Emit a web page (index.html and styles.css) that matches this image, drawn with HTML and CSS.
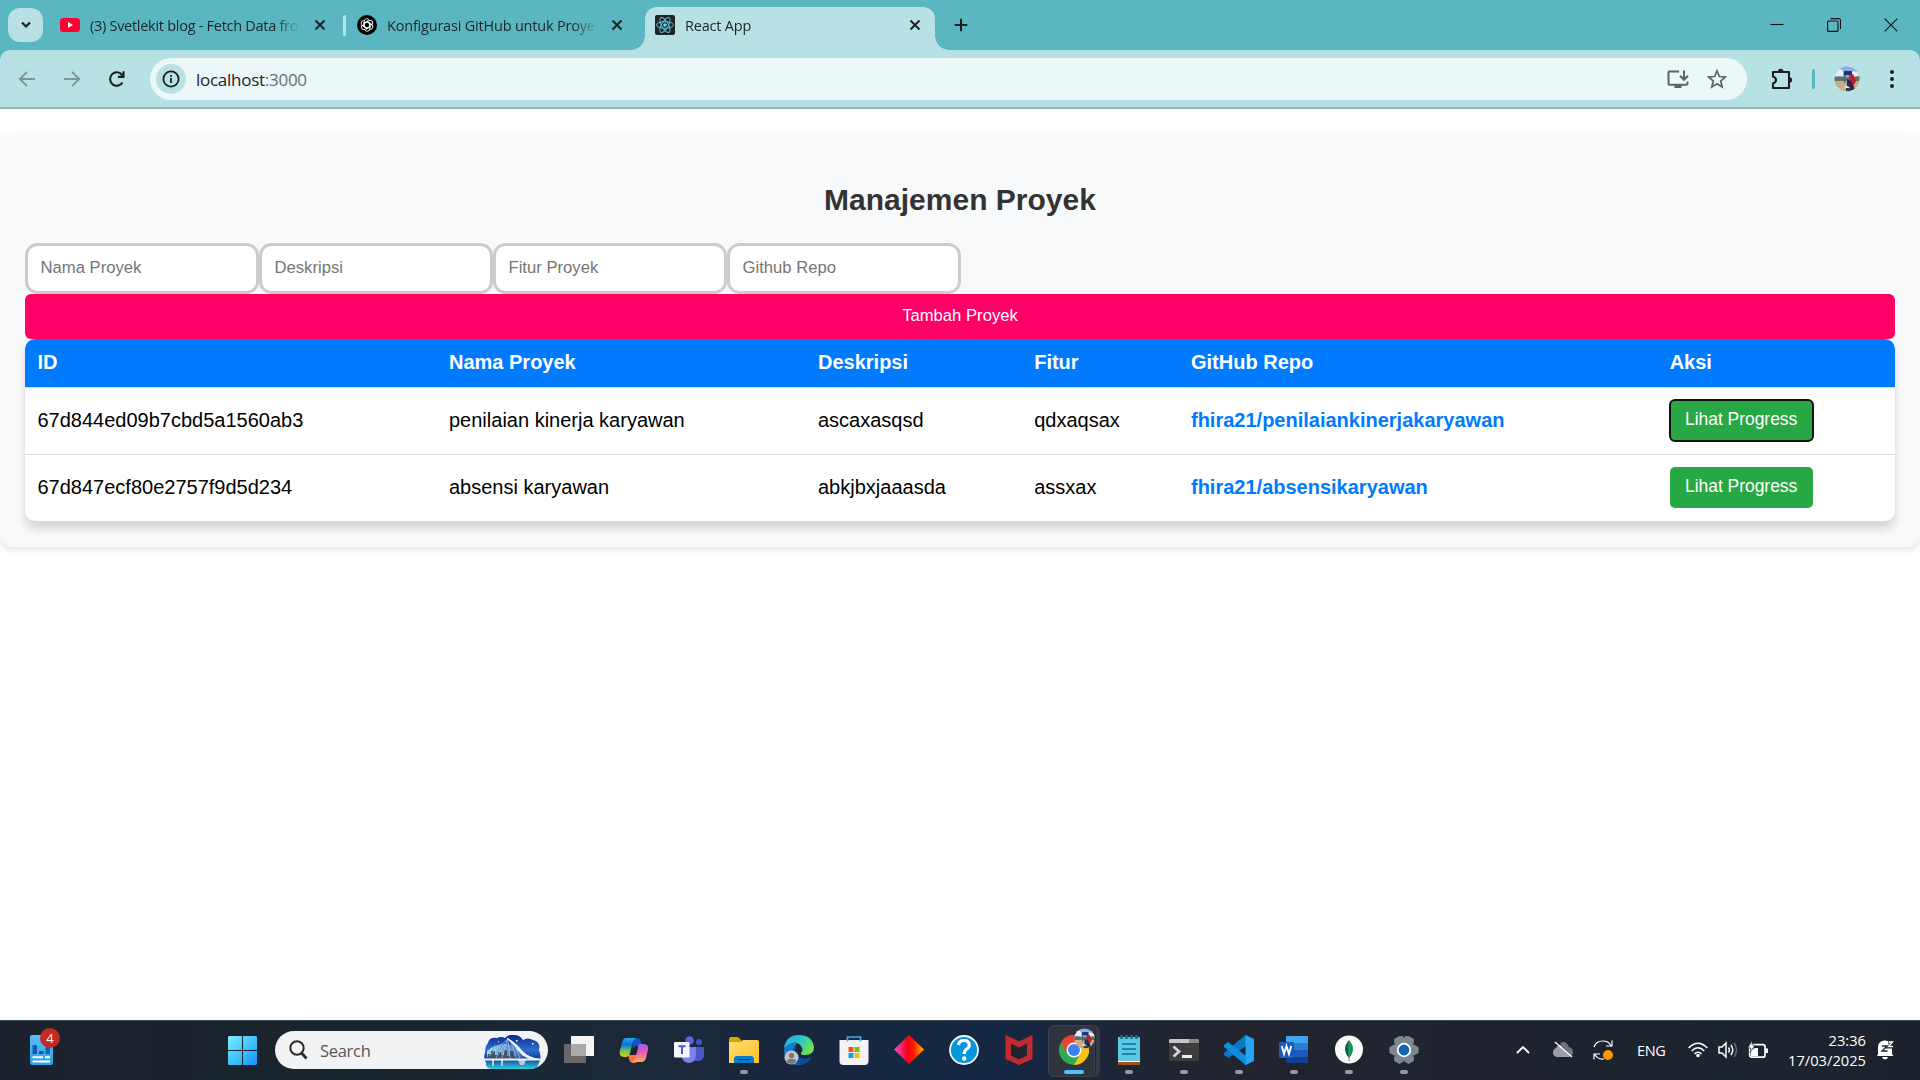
FILE: index.html
```html
<!DOCTYPE html>
<html lang="id">
<head>
<meta charset="utf-8">
<title>React App</title>
<link rel="stylesheet" href="styles.css">
</head>
<body>
<header class="browser">
  <div class="tabstrip">
    <button class="tab-search"><svg width="12" height="12" viewBox="0 0 12 12"><path d="M2 3.5 6 7.5 10 3.5" fill="none" stroke="#1f1f1f" stroke-width="2.2"/></svg></button>
    <div class="tab">
      <svg class="fav" viewBox="0 0 20 20"><rect y="3" width="20" height="14" rx="3.5" fill="#ff0033"/><path d="M8 7v6l5-3z" fill="#fff"/></svg>
      <span class="tab-title t1">(3) Svetlekit blog - Fetch Data from</span>
      <svg class="x" viewBox="0 0 12 12"><path d="M1.5 1.5l9 9M10.500 1.500l-9 9"/></svg>
    </div>
    <i class="sep"></i>
    <div class="tab second">
      <svg class="fav" viewBox="0 0 20 20"><circle cx="10" cy="10" r="10" fill="#000"/><g fill="none" stroke="#fff" stroke-width=".9"><path id="k" d="M7.300 10.800V6.300a2.600 2.600 0 0 1 5-1M7.300 8.300l3-1.700 4 2.300"/><use href="#k" transform="rotate(60 10 10)"/><use href="#k" transform="rotate(120 10 10)"/><use href="#k" transform="rotate(180 10 10)"/><use href="#k" transform="rotate(240 10 10)"/><use href="#k" transform="rotate(300 10 10)"/></g></svg>
      <span class="tab-title t2">Konfigurasi GitHub untuk Proyek</span>
      <svg class="x" viewBox="0 0 12 12"><path d="M1.500 1.500l9 9M10.500 1.500l-9 9"/></svg>
    </div>
    <div class="tab active">
      <svg class="fav" viewBox="0 0 20 20"><rect width="20" height="20" rx="2" fill="#222"/><g fill="none" stroke="#58c4dc" stroke-width="1"><ellipse cx="10" cy="10" rx="8.500" ry="3.300"/><ellipse cx="10" cy="10" rx="8.500" ry="3.300" transform="rotate(60 10 10)"/><ellipse cx="10" cy="10" rx="8.500" ry="3.300" transform="rotate(120 10 10)"/></g><circle cx="10" cy="10" r="1.800" fill="#61dafb"/></svg>
      <span class="tab-title t3">React App</span>
      <svg class="x" viewBox="0 0 12 12"><path d="M1.500 1.500l9 9M10.500 1.500l-9 9"/></svg>
    </div>
    <svg class="plus" viewBox="0 0 14 14"><path d="M7 .7v12.600M.7 7h12.600" stroke="#1f1f1f" stroke-width="2"/></svg>
    <div class="window-controls">
      <svg viewBox="0 0 14 14"><path d="M.5 6.500h13"/></svg>
      <svg viewBox="0 0 14 14"><rect x=".6" y="3" width="10.400" height="10.400" rx="1"/><path d="M3.500 .6h8q2 0 2 2v8.400"/></svg>
      <svg viewBox="0 0 14 14"><path d="M.7 .7l12.600 12.600M13.300 .7.7 13.300"/></svg>
    </div>
  </div>
  <div class="toolbar">
    <svg class="nav dim" viewBox="0 0 20 20"><path d="M18 10H3M10 2.800 2.800 10l7.200 7.200"/></svg>
    <svg class="nav dim" viewBox="0 0 20 20"><path d="M2 10h15M10 2.800l7.200 7.200-7.200 7.200"/></svg>
    <svg class="nav" viewBox="0 0 20 20"><path d="M15.500 13.500a6.700 6.700 0 1 1-.6-7.800l1.600 1.800M16.500 2.300v5.600h-5.600" stroke-width="2.100"/></svg>
    <div class="omnibox">
      <span class="info"><svg width="18" height="18" viewBox="0 0 18 18"><circle cx="9" cy="9" r="7.600" fill="none" stroke="#1f1f1f" stroke-width="1.800"/><path d="M9 8v5M9 5v1.800" stroke="#1f1f1f" stroke-width="1.800"/></svg></span>
      <span class="url">localhost<span>:3000</span></span>
      <svg class="install" viewBox="0 0 22 20"><g fill="none" stroke="#5a6365" stroke-width="2"><path d="M12 2.500H2.500q-1 0-1 1v11.200q0 1 1 1h17q1 0 1-1V12.500M17 1.500v9M13 6.800l4 4 4-4"/></g><path d="M7.500 16h7v3h-7z" fill="#5a6365"/></svg>
      <svg class="star" viewBox="0 0 20 20"><path d="M10 1.800l2.300 5.700 6 .5-4.600 4 1.500 6L10 14.800 4.800 18l1.500-6L1.700 8l6-.5z" fill="none" stroke="#5a6365" stroke-width="1.700"/></svg>
    </div>
    <svg class="puzzle" viewBox="0 0 22 22"><path d="M2 4h16v16H2v-4.500q3-1 3-3.500T2 8.500z" fill="none" stroke="#1f1f1f" stroke-width="2.100" stroke-linejoin="round"/><path d="M7 3.500a2.700 2.700 0 0 1 5.400 0M18.500 9.300a2.600 2.600 0 0 1 0 5.200" fill="#1f1f1f"/></svg>
    <i class="divider"></i>
    <svg class="avatar" viewBox="0 0 26 26"><defs><clipPath id="av"><circle cx="13" cy="13" r="12.500"/></clipPath><g id="pic"><path fill="#84aee4" d="M0 0h26v12H0z"/><path fill="#e9edf5" d="M1 4q5-3 8 1v5H1zM17 6q4-2 9 2v4h-9z"/><path fill="#65705a" d="M0 12q3-2 7-1 6 1 19-1v5H0z"/><path fill="#c9ad89" d="M0 15h26v11H0z"/><path fill="#203477" d="M10 5h8v4h-8z"/><path fill="#59606f" d="M10 9h1.500v8H10z"/><path fill="#ba2038" d="M15 9l4-1 3 7-2 4-4-4z"/><path fill="#262948" d="M13 13l4 2 2 3 2 6h-5l-3-5z"/><path fill="#e8ecf4" d="M10 20l6 1-3 3z"/><path fill="#343750" d="M12 22h5v3h-5z"/></g></defs><g clip-path="url(#av)"><use href="#pic"/></g></svg>
    <svg class="dots" viewBox="0 0 6 20"><circle cx="3" cy="3" r="2"/><circle cx="3" cy="10" r="2"/><circle cx="3" cy="17" r="2"/></svg>
  </div>
</header>

<main class="page">
  <section class="container">
    <h2>Manajemen Proyek</h2>
    <form class="fields">
      <input placeholder="Nama Proyek"><input placeholder="Deskripsi"><input placeholder="Fitur Proyek"><input placeholder="Github Repo">
    </form>
    <button class="add">Tambah Proyek</button>
    <table class="projects">
      <colgroup><col class="c-id"><col class="c-name"><col class="c-desc"><col class="c-feat"><col class="c-repo"><col class="c-act"></colgroup>
      <thead><tr><th>ID</th><th>Nama Proyek</th><th>Deskripsi</th><th>Fitur</th><th>GitHub Repo</th><th>Aksi</th></tr></thead>
      <tbody>
        <tr><td>67d844ed09b7cbd5a1560ab3</td><td>penilaian kinerja karyawan</td><td>ascaxasqsd</td><td>qdxaqsax</td><td><a>fhira21/penilaiankinerjakaryawan</a></td><td><button class="progress focused">Lihat Progress</button></td></tr>
        <tr><td>67d847ecf80e2757f9d5d234</td><td>absensi karyawan</td><td>abkjbxjaaasda</td><td>assxax</td><td><a>fhira21/absensikaryawan</a></td><td><button class="progress">Lihat Progress</button></td></tr>
      </tbody>
    </table>
  </section>
</main>

<footer class="taskbar">
  <div class="widget">
    <svg width="23" height="30" viewBox="0 0 23 30"><defs><linearGradient id="wg" x2="0" y2="1"><stop stop-color="#5cbcf5"/><stop offset="1" stop-color="#2b9fe6"/></linearGradient></defs><rect width="23" height="30" rx="2" fill="url(#wg)"/><path fill="#0b5fae" d="M2.500 10h4.500v9H2.500zM9 16h4.500v3H9zM15.500 12h4.500v7h-4.500z"/><path stroke="#fff" stroke-width="2" d="M2.500 22.300h10.500M15 22.300h5M2.500 26.500h17.500"/></svg>
    <span class="badge">4</span>
  </div>
  <svg class="start" viewBox="0 0 29 29"><defs><linearGradient id="sg" x2="1" y2="1"><stop stop-color="#7aeefd"/><stop offset=".5" stop-color="#43c4fd"/><stop offset="1" stop-color="#1490f7"/></linearGradient></defs><path fill="url(#sg)" d="M1 0h13v14H0V1zM15 0h13l1 1v13H15zM0 15h14v14H1l-1-1zM15 15h14v13l-1 1H15z"/></svg>
  <div class="search">
    <svg width="19" height="20" viewBox="0 0 19 20"><circle cx="8" cy="8" r="6.700" fill="none" stroke="#2b2b2b" stroke-width="2"/><path d="M12.500 13l5 5.500" stroke="#2b2b2b" stroke-width="2.800"/></svg>
    <span>Search</span>
    <svg class="bridge" viewBox="0 0 58 34"><defs><linearGradient id="bg" x2="0" y2="1"><stop stop-color="#0c2a8c"/><stop offset=".45" stop-color="#2f6fcb"/><stop offset=".7" stop-color="#0f3f9c"/><stop offset="1" stop-color="#2ed0dc"/></linearGradient><linearGradient id="sky" x2="1"><stop stop-color="#9fdcec"/><stop offset="1" stop-color="#6ea7e0" stop-opacity=".2"/></linearGradient></defs><path fill="url(#bg)" d="M5 8Q6 2 14 3q4-2 8 0 4-4 9-3 6 0 9 5 5-3 10 0 8 2 6 10 3 7 0 13-2 6-8 6H10q-8 0-7-6-3-5-1-10Q2 11 5 8z"/><path fill="url(#sky)" d="M4 16q8-8 21-7 10 3 17 14H4z"/><path fill="#43516b" d="M5 19h3v-3h4v4h3v-3h3v3h3v-5h3v6h3v-5h4v5h3v3H4z"/><path fill="#c0c7d5" d="M9 25h2v6H9zM18 25h2v6h-2zM35 25h8l-2 5h-4z"/><path d="M1 24.500h56" stroke="#eef3fa" stroke-width="1.800"/><path d="M24 3q9 5 16 14 6 6 17 7.500-10 1-18-5Q32 11 24 3z" fill="#f1f5fd" stroke="#f1f5fd"/><path d="M25 3.500L6 21M25 4l-12 19M25 4l-6 19M25 4l2 20M28 7l5 16M33 12l4 12" stroke="#d4e3f6" stroke-width=".5"/><path fill="#fff" d="M33 5h1.500v1.500H33zM49 8h1.500v1.500H49zM15 6h1v1h-1z"/></svg>
  </div>
  <div class="apps">
    <div class="app"><svg viewBox="0 0 30 30"><path fill="#f4f4f4" d="M7 1h23v20H7z"/><path fill="#686868" d="M0 9h22v19H0z"/><path fill="#aaa" d="M7 9h15v12H7z"/></svg></div>
    <div class="app"><svg viewBox="0 0 30 30"><defs><linearGradient id="c1" x2="0" y2="1"><stop stop-color="#22a6f0"/><stop offset=".35" stop-color="#1271d8"/><stop offset=".65" stop-color="#5cc469"/><stop offset="1" stop-color="#f7c80b"/></linearGradient><linearGradient id="c2" x2="0" y2="1"><stop stop-color="#9362e9"/><stop offset=".5" stop-color="#ef5caa"/><stop offset="1" stop-color="#ffb15a"/></linearGradient></defs><path fill="#1453ca" d="M13 3h5q3 0 4 4l1 4h-7l-2 3z"/><path fill="url(#c1)" d="M7 3h10q-3 2-4 7l-2 8q-1 4-5 4-7 0-5-7l2-7q1-5 4-5z"/><path fill="#f3763f" d="M9 20h8l3-5v8q-2 5-4 5h-2q-3 0-4-4z"/><path fill="url(#c2)" d="M20 9h5q5 0 4 6l-2 8q-1 4-5 4h-9q3-1 4-6l2-8q0-3 1-4z"/></svg></div>
    <div class="app"><svg viewBox="0 0 30 30"><circle cx="15.500" cy="5.500" r="4.300" fill="#5c65d8"/><circle cx="25" cy="7" r="3" fill="#4651c4"/><path fill="#4d55c7" d="M20 12h10v9q-1 5-6 5h-5z"/><path fill="#7b83eb" d="M9 12h13v8q-1 8-7 8-5 0-7-5z"/><rect y="7" width="15.500" height="15.500" rx="1" fill="#f5f5ff"/><path stroke="#5059c9" stroke-width="2" fill="none" d="M4.500 11.300h7M8 11v8"/></svg></div>
    <div class="app run"><svg viewBox="0 0 30 30"><defs><linearGradient id="fg" x2="1" y2="1"><stop stop-color="#ffdf70"/><stop offset="1" stop-color="#ffbe28"/></linearGradient></defs><path fill="#dfa000" d="M0 4q0-2 2-2h7l4 4v5H0z"/><path fill="url(#fg)" d="M0 7h12l2-2h14q2 0 2 2v21H0z"/><path fill="#087bcd" d="M5 28v-4q0-3 3-3h14q3 0 3 3v4z"/><path d="M9 24.500h12" stroke="#04457c"/></svg></div>
    <div class="app"><svg viewBox="0 0 30 30"><defs><linearGradient id="eg" x2="1" y2=".5"><stop stop-color="#26a7e8"/><stop offset=".5" stop-color="#2bc3d2"/><stop offset="1" stop-color="#6be24f"/></linearGradient></defs><path fill="#1679ce" d="M0 14Q5 5 13 8q-6 6 1 15 6 4 13 0-5 7-12 7Q0 30 0 14z"/><path fill="#0c4e9c" d="M13 10q-5 7 2 12 5 3 12 .5Q22 30 15 30 5 25 9 14z"/><path fill="url(#eg)" d="M0 13Q2 0 15 0q13 0 15 12 0 8-9 8-5 0-4-2 3-3 0-7Q11 3 0 13z"/><circle cx="7.500" cy="22.500" r="7" fill="#c7c7c9"/><circle cx="7.500" cy="20.500" r="2.700" fill="#77797c"/><path fill="#77797c" d="M2.500 27q0-3.300 5-3.300t5 3.300q-5 4-10 0z"/></svg></div>
    <div class="app"><svg viewBox="0 0 30 30"><path fill="#f3f3f3" d="M.5 5h29v21q0 4-4 4h-21q-4 0-4-4z"/><path fill="#f25022" d="M9.500 12h5v5h-5z"/><path fill="#7fba00" d="M15.500 12h5v5h-5z"/><path fill="#00a4ef" d="M9.500 18h5v5h-5z"/><path fill="#ffb900" d="M15.500 18h5v5h-5z"/><path d="M8.500 6.500V2h13v4.500" fill="none" stroke="#29b6ed" stroke-width="1.700"/></svg></div>
    <div class="app"><svg viewBox="0 0 30 30"><defs><linearGradient id="dg"><stop stop-color="#f04ad8"/><stop offset=".45" stop-color="#fb0018"/><stop offset=".65" stop-color="#ff1a00"/><stop offset="1" stop-color="#ffb900"/></linearGradient></defs><path fill="url(#dg)" d="M15 0l15 14.500L15 29 0 14.500z"/></svg></div>
    <div class="app"><svg viewBox="0 0 30 30"><circle cx="15" cy="15" r="14" fill="#0796dc" stroke="#f2f6fa" stroke-width="1.800"/><path d="M9.500 10q.5-4.500 5.500-4.500t5.300 4.500q0 2.500-2.500 4-2.600 1.600-2.600 5" fill="none" stroke="#fff" stroke-width="3.200"/><circle cx="15.200" cy="23.500" r="2.200" fill="#fff"/></svg></div>
    <div class="app"><svg viewBox="0 0 30 30"><path fill="#c52b2e" d="M1.500 0L15 6.500 28.500 0v24L15 30 1.500 24z"/><path fill="#20252f" d="M7 8.500l8 4 8-4v12l-8 4-8-4z"/></svg></div>
    <div class="app run current"><svg viewBox="0 0 30 30"><circle cx="15" cy="15" r="15" fill="#31a852"/><path fill="#ea4335" d="M2 7.500A15 15 0 0 1 28 7.500H15L8.500 18.800z"/><path fill="#fbc116" d="M28 7.500A15 15 0 0 1 15 30l6.500-11.200L15 7.500z"/><circle cx="15" cy="15" r="7.500" fill="#fff"/><circle cx="15" cy="15" r="6" fill="#3b82ee"/></svg><svg class="mini" viewBox="0 0 26 26"><g clip-path="url(#av)"><use href="#pic"/></g></svg></div>
    <div class="app run"><svg viewBox="0 0 30 30"><path fill="#a74e12" d="M4 25h22v5H4z"/><path fill="#fff" d="M4 25h22v2H4z"/><path fill="#5bc9e2" d="M4 2h22v24H4z"/><path d="M8 9h14M8 14h14M8 19h14" stroke="#08739b" stroke-width="1.600"/><path d="M7.500 0v4M12.500 0v4M17.500 0v4M22.500 0v4" stroke="#0c7290" stroke-width="2.600"/></svg></div>
    <div class="app run"><svg viewBox="0 0 30 30"><rect y="4" width="30" height="22" rx="1.500" fill="#3d3d3d"/><path fill="#c7c5c9" d="M1 4h9v4H0V5z"/><path fill="#c7c5c9" d="M9 4h11v4H9z"/><path fill="#8b898d" d="M20 4h9l1 1v3H20z"/><path d="M4.500 11.500l5.500 5-5.500 5" stroke="#d2d2d2" stroke-width="2.800" fill="none"/><path d="M13 21.500h10" stroke="#eee" stroke-width="3"/></svg></div>
    <div class="app run"><svg viewBox="0 0 30 30"><path fill="#0879c5" d="M21.500 0l2 1v9L4.500 23 0 20v-2z"/><path fill="#0f8ddd" d="M0 10l4-3 19.500 15v7l-2 1L0 12z"/><path fill="#23a5f3" d="M21.500 0L30 4v22l-8.500 4z"/></svg></div>
    <div class="app run"><svg viewBox="0 0 30 30"><path fill="#41a5ee" d="M7 1h22v7H7z"/><path fill="#2b7cd3" d="M7 8h22v7H7z"/><path fill="#185abd" d="M7 15h22v7H7z"/><path fill="#103f91" d="M7 22h22v6H7z"/><rect y="7" width="15" height="16" rx="1" fill="#185abd"/><path d="M2.800 11l2.200 8 2.500-8L10 19l2.200-8" stroke="#fff" stroke-width="1.900" fill="none"/></svg></div>
    <div class="app run"><svg viewBox="0 0 30 30"><circle cx="15" cy="14.500" r="14" fill="#fafafa"/><path fill="#00684a" d="M15 5q-8 9 0 18z"/><path fill="#13954f" d="M15 5q8 9 0 18z"/><path d="M15 6v20" stroke="#678a79" stroke-width="1"/></svg></div>
    <div class="app run"><svg viewBox="0 0 30 30"><g fill="#7d8790"><circle cx="15" cy="15" r="11"/><path id="t" d="M10 6l1.500-5h2l1.500 2 1.500-2h2L20 6z"/><path id="g" d="M25 9.500l4.500 2.500v6L25 20.500z"/><use href="#g" transform="rotate(60 15 15)"/><use href="#g" transform="rotate(120 15 15)"/><use href="#g" transform="rotate(180 15 15)"/><use href="#g" transform="rotate(240 15 15)"/><use href="#g" transform="rotate(300 15 15)"/></g><circle cx="15" cy="15" r="6.300" fill="#1267b5" stroke="#fff" stroke-width="1.800"/></svg></div>
  </div>
  <div class="tray">
    <svg class="chev" viewBox="0 0 14 8"><path d="M1 7l6-6 6 6" fill="none" stroke="#fff" stroke-width="1.800"/></svg>
    <svg class="cloud" viewBox="0 0 20 20"><path fill="#9b9fa4" d="M3 8q1-3 5-3l9 12H4q-4-1-4-4 0-4 3-5z"/><path fill="#70757b" d="M7 3q6-3 9 4 4 1 4 5 0 4-3 5z"/><path d="M2 2l17 15" stroke="#fff" stroke-width="1.300"/></svg>
    <svg class="sync" viewBox="0 0 20 20"><path d="M1 7Q3 1 10 1q6 0 8 5M19 .5V6h-6M1 19.500V14h6M1.500 14Q5 20 11 19" fill="none" stroke="#fff" stroke-width="1.200"/><circle cx="15" cy="15" r="5" fill="#ff9800"/></svg>
    <span class="lang">ENG</span>
    <svg class="wifi" viewBox="0 0 20 16"><g fill="none" stroke="#fff" stroke-width="1.600"><path d="M.7 6Q10-3.500 19.300 6M3.700 9Q10 2.500 16.300 9M6.500 12Q10 8.500 13.500 12"/></g><circle cx="10" cy="13.500" r="1.800" fill="#fff"/></svg>
    <svg class="speaker" viewBox="0 0 20 18"><path d="M1 6h3l4-4v14l-4-4H1z" fill="none" stroke="#fff" stroke-width="1.500"/><path d="M10.500 6.500q2 2.500 0 5M12.800 4q4 5 0 10" fill="none" stroke="#fff" stroke-width="1.400"/><path d="M16 2q5 7 0 14" fill="none" stroke="#656c76" stroke-width="1.400"/></svg>
    <svg class="battery" viewBox="0 0 20 18"><rect x="1.700" y="3.700" width="15.300" height="12.500" rx="2" fill="none" stroke="#fff" stroke-width="1.700"/><path fill="#fff" d="M17 7.500h3V12h-3zM3 15V9l4-2h3v8z"/><path fill="#fff" stroke="#1c2430" stroke-width=".6" d="M4-.5L0 7h3l-1 5 5-8H4z"/></svg>
    <div class="clock">23:36<br>17/03/2025</div>
    <svg class="bell" viewBox="0 0 17 20"><path fill="#fff" d="M1 14V7q0-6 7-6.500 6 0 7 6v7.500l1.500 2H0zM5 17h6q-1 2.500-3 2.500T5 17z"/><path d="M5 6h5L5 11h5.500" stroke="#20262f" stroke-width="1.300" fill="none"/><path d="M11 2h5l-4.500 5H17" stroke="#20262f" stroke-width="3" fill="none"/><path d="M11.500 2h4l-4 4.500H16" stroke="#fff" stroke-width="1.300" fill="none"/></svg>
  </div>
</footer>
</body>
</html>
```
FILE: styles.css
```css
* { box-sizing: border-box; }
body { margin: 0; height: 1080px; display: flex; flex-direction: column; overflow: hidden; background: #fff; font-family: "Liberation Sans", Arial, sans-serif; }
svg { display: block; flex: none; }
button { font-family: inherit; border: 0; margin: 0; }

/* browser frame */
.browser { height: 109px; flex: none; background: #5ab7c1; font-family: "Open Sans", "Noto Sans", sans-serif; color: #1d2426; }
.tabstrip { height: 50px; display: flex; align-items: center; padding-left: 8px; }
.tab-search { width: 35px; height: 34px; border-radius: 12px; background: #b8e1e4; display: flex; align-items: center; justify-content: center; padding: 0; }
.tab { width: 300px; height: 100%; display: flex; align-items: center; padding-left: 17px; }
.fav { width: 20px; height: 20px; }
.tab-title { width: 210px; margin-left: 10px; padding-top: 1px; font-size: 14.500px; line-height: 20px; letter-spacing: -.2px; white-space: nowrap; overflow: hidden; -webkit-mask-image: linear-gradient(90deg, #000 88%, transparent); mask-image: linear-gradient(90deg, #000 88%, transparent); }
.t1 { letter-spacing: -.28px; }
.x { width: 12px; height: 12px; margin-left: 14px; stroke: #1d2426; stroke-width: 2; fill: none; }
.sep { width: 3px; height: 21px; background: #b8e1e4; border-radius: 2px; }
.second { width: 299px; padding-left: 11px; }
.second .x { margin-left: 14px; }
.active { width: 290px; height: 43px; align-self: flex-end; padding: 0 0 7px 10px; border-radius: 12px 12px 0 0; background: #b8e1e4; position: relative; }
.active::before, .active::after { content: ""; position: absolute; bottom: 0; width: 14px; height: 14px; }
.active::before { left: -14px; background: radial-gradient(circle at 0 0, transparent 13.500px, #b8e1e4 14px); }
.active::after { right: -14px; background: radial-gradient(circle at 100% 0, transparent 13.500px, #b8e1e4 14px); }
.plus { width: 14px; height: 14px; margin-left: 19px; }
.window-controls { margin-left: auto; padding-right: 22px; display: flex; gap: 43px; }
.window-controls svg { width: 14px; height: 14px; fill: none; stroke: #111; stroke-width: 1.100; }

.toolbar { height: 59px; background: #b8e1e4; border-bottom: 2px solid #90b5b8; border-radius: 10px 10px 0 0; display: flex; align-items: center; padding-left: 17px; }
.nav { width: 20px; height: 20px; margin-right: 25px; fill: none; stroke: #1f1f1f; stroke-width: 1.900; }
.dim { stroke: #7b9799; }
.omnibox { width: 1597px; height: 42px; margin-left: -2px; border-radius: 21px; background: #ebf7f8; display: flex; align-items: center; padding-left: 6px; }
.info { width: 30px; height: 30px; border-radius: 50%; background: #b8e1e4; display: flex; align-items: center; justify-content: center; }
.url { margin-left: 10px; padding-top: 1px; font-size: 17px; letter-spacing: -.27px; }
.url span { color: #667073; }
.install { width: 22px; height: 20px; margin-left: auto; }
.star { width: 20px; height: 20px; margin: 0 20px 0 18px; }
.puzzle { width: 22px; height: 22px; margin-left: 24px; }
.divider { width: 3px; height: 20px; margin-left: 19px; border-radius: 2px; background: #5ab7c1; }
.avatar { width: 26px; height: 26px; margin-left: 19px; }
.dots { width: 6px; height: 20px; margin-left: 29px; fill: #1f1f1f; }

/* page */
.page { flex: 1; padding-top: 25px; }
.container { height: 413px; padding: 49px 25px 25px; background: #f8f9fa; border-radius: 12.500px; box-shadow: 0 2.500px 6px rgba(0, 0, 0, .1); }
h2 { margin: 0 0 26px; font-size: 30px; line-height: 34px; text-align: center; color: #333; }
.fields { width: 936px; display: grid; grid-template-columns: repeat(4, 1fr); margin: 0; }
.fields input { min-width: 0; height: 51px; padding: 0 12.500px 1px; border: 3px solid #ccc; border-radius: 12.500px; background: #fff; font: 16.670px "Liberation Sans", Arial, sans-serif; outline: 0; }
.fields input::placeholder { color: #757575; }
.add { display: block; width: 100%; height: 45px; border-radius: 6px; background: #f06; color: #fff; font-size: 16.670px; padding: 0 0 2px; }
.projects { width: 100%; table-layout: fixed; border-collapse: separate; border-spacing: 0; border-radius: 10px; overflow: hidden; background: #fff; box-shadow: 0 8px 8px rgba(0, 0, 0, .14); font-size: 20px; color: #000; }
.projects th { height: 49px; padding: 0 12.500px 1px; text-align: left; background: #007bff; color: #fff; border-bottom: 1px solid #ddd; }
.projects td { height: 67px; padding: 0 12.500px 2px; border-bottom: 1px solid #ddd; }
.projects tr:last-child td { height: 66px; border-bottom: 0; }
.c-id { width: 411.500px; } .c-name { width: 369px; } .c-desc { width: 216.200px; } .c-feat { width: 156.800px; } .c-repo { width: 478.700px; }
.projects a { color: #007bff; font-weight: bold; }
.progress { display: block; width: 143px; height: 41px; padding: 0 0 1px; border-radius: 5px; background: #28a745; color: #fff; font-size: 17.500px; letter-spacing: -.05px; }
.focused { outline: 2px solid #101010; outline-offset: -1px; }

/* taskbar */
.taskbar { height: 60px; flex: none; border-top: 1px solid #39484d; padding-bottom: 1px; background: linear-gradient(90deg, #1c222d 0%, #18252d 20%, #1b2838 32%, #152744 52%, #22252f 62%, #1e232e 80%, #1b2530 90%, #1c222d 100%); display: flex; align-items: center; color: #fff; font-family: "Open Sans", "Noto Sans", sans-serif; }
.widget { position: relative; margin-left: 30px; width: 23px; }
.badge { position: absolute; left: 10px; top: -7px; width: 20px; height: 20px; border-radius: 50%; background: #c42b1c; font-size: 13px; line-height: 20px; text-align: center; }
.start { width: 29px; height: 29px; margin-left: 175px; }
.search { width: 273px; height: 38px; margin-left: 18px; border-radius: 19px; background: #f2f3f5; display: flex; align-items: center; padding-left: 14px; color: #575757; font-size: 16.500px; }
.search span { margin-left: 12px; padding-top: 1px; letter-spacing: -.3px; }
.bridge { width: 58px; height: 34px; margin: 3px 7px 0 auto; }
.apps { display: flex; margin-left: 3px; }
.app { position: relative; width: 55px; height: 50px; display: flex; align-items: center; justify-content: center; }
.app > svg:first-child { width: 30px; height: 30px; position: relative; }
.run::after { content: ""; position: absolute; left: 23.500px; bottom: 1px; width: 8px; height: 4px; border-radius: 2px; background: #969a9f; }
.current::before { content: ""; position: absolute; left: 2px; top: 0; width: 45px; height: 50px; border-radius: 6px; background: #2f343e; border: 1px solid #3d424b; box-shadow: 1px 0 #20252f, 5px 0 #343943; }
.current::after { left: 17.500px; width: 20px; background: #4cc2ff; }
.mini { position: absolute; left: 28px; top: 3px; width: 21px; height: 21px; }
.tray { display: flex; align-items: center; margin-left: auto; padding-right: 26px; }
.chev { width: 14px; height: 8px; }
.cloud { width: 20px; height: 20px; margin-left: 23px; }
.sync { width: 20px; height: 20px; margin-left: 20px; }
.lang { margin-left: 24px; width: 29px; font-size: 14.500px; letter-spacing: -.3px; }
.wifi { width: 20px; height: 16px; margin-left: 22px; }
.speaker { width: 20px; height: 18px; margin-left: 10px; }
.battery { width: 20px; height: 18px; margin-left: 10px; }
.clock { width: 98px; text-align: right; font-size: 14.700px; line-height: 20px; letter-spacing: 0; }
.bell { width: 17px; height: 20px; margin-left: 11px; }
```
